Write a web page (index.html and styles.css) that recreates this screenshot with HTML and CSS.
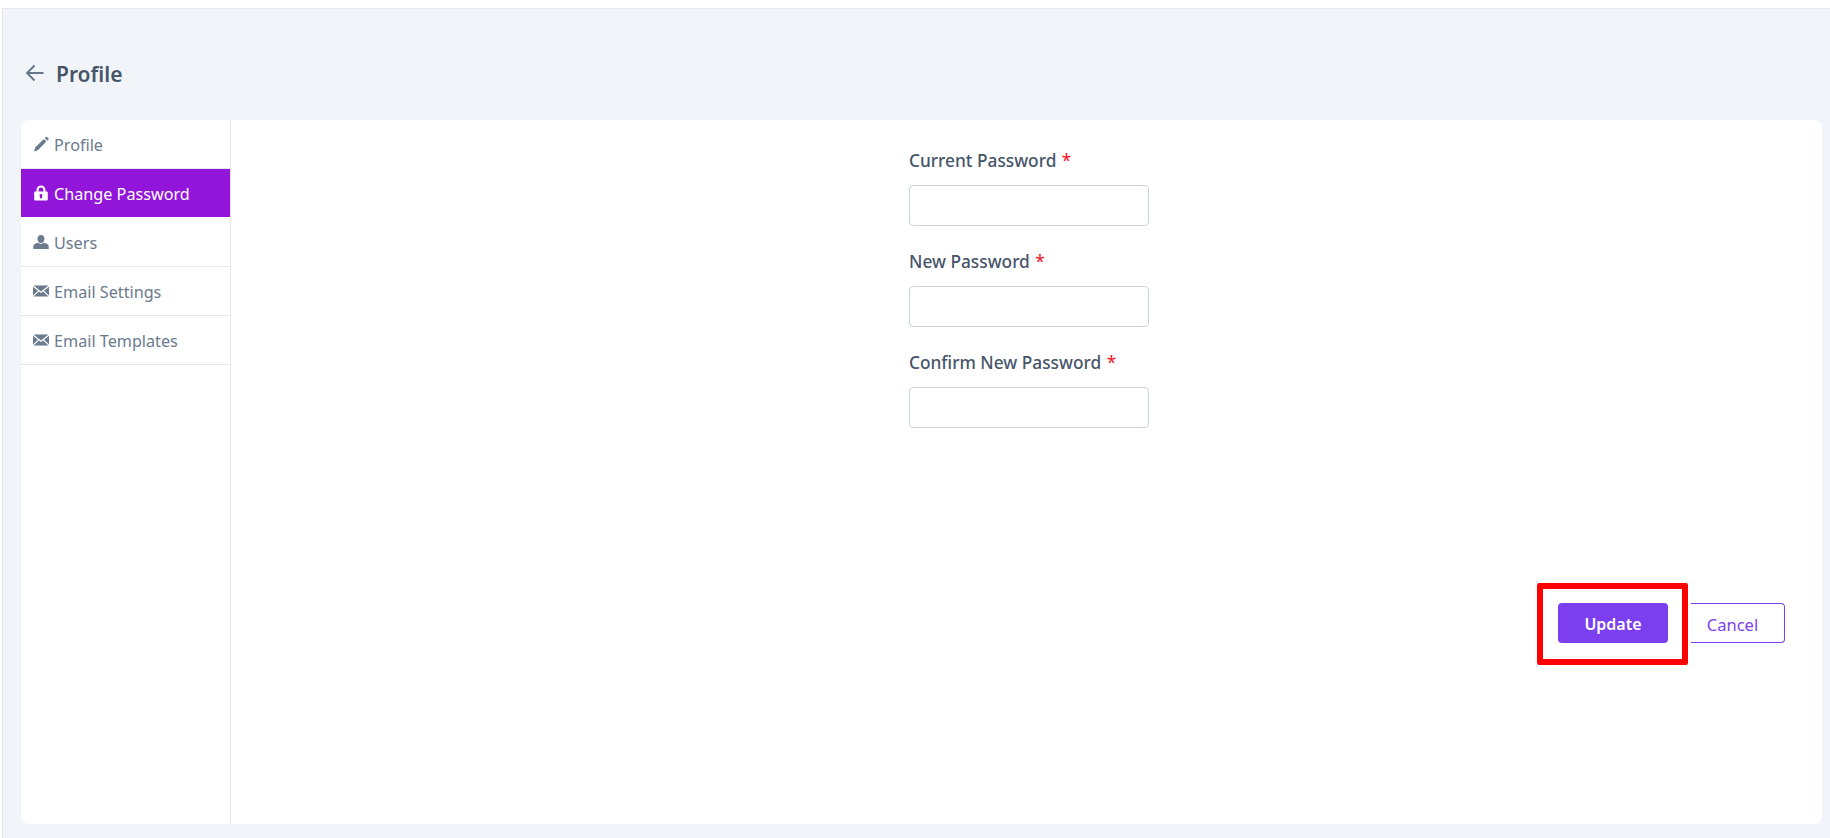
FILE: index.html
```html
<!DOCTYPE html>
<html lang="en">
<head>
<meta charset="utf-8">
<title>Profile</title>
<link rel="stylesheet" href="styles.css">
</head>
<body>
<main class="app">
  <header class="page-head">
    <svg class="back" viewBox="0 0 20 20" width="20" height="20"><path d="M18.500 10H2M9.500 2.500 2 10l7.500 7.500" fill="none" stroke="currentColor" stroke-width="1.8"/></svg>
    <h1>Profile</h1>
  </header>
  <section class="card">
    <nav class="side">
      <a class="item"><svg class="ico" viewBox="0 0 16 16"><path d="M10.800 3 13.400 5.600 4.800 14.200 1 15.500 2.200 11.600ZM11.700 2.100l1.200-1.200a.8.8 0 0 1 1.100 0l1.500 1.500a.8.8 0 0 1 0 1.100l-1.200 1.200Z" fill="currentColor"/></svg><span>Profile</span></a>
      <a class="item active"><svg class="ico" viewBox="0 0 16 16"><path fill-rule="evenodd" d="M3.500 6.500V5a4.500 4.500 0 0 1 9 0v1.500h1c.7 0 1.300.5 1.300 1.200v6.500c0 .7-.6 1.300-1.300 1.300H2.500c-.7 0-1.300-.6-1.300-1.300V7.700c0-.7.600-1.200 1.300-1.200ZM5.600 6.500h4.800V5a2.400 2.400 0 0 0-4.800 0ZM8 9a1.500 1.500 0 0 0-.9 2.700V13.500h1.800v-1.800A1.500 1.500 0 0 0 8 9Z" fill="currentColor"/></svg><span>Change Password</span></a>
      <a class="item"><svg class="ico" viewBox="0 0 16 16"><path d="M8 1c2.200 0 3.500 1.600 3.500 3.700S10.200 9 8 9 4.500 6.800 4.500 4.700 5.800 1 8 1ZM5.300 8.800C6 9.500 7 10 8 10s2-.5 2.700-1.200c2.800.5 5 1.600 5 3.400V15H.3v-2.800c0-1.800 2.200-2.900 5-3.400Z" fill="currentColor"/></svg><span>Users</span></a>
      <a class="item"><svg class="ico" viewBox="0 0 16 16"><path d="M.5 2.500h15L8 8.500ZM0 3.700 5 7.700 0 12.500ZM16 3.700V12.500L11 7.700ZM5.900 8.400 8 10.100l2.100-1.700 5.400 5.100H.5Z" fill="currentColor"/></svg><span>Email Settings</span></a>
      <a class="item"><svg class="ico" viewBox="0 0 16 16"><path d="M.5 2.500h15L8 8.500ZM0 3.700 5 7.700 0 12.500ZM16 3.700V12.500L11 7.700ZM5.900 8.400 8 10.100l2.100-1.700 5.400 5.100H.5Z" fill="currentColor"/></svg><span>Email Templates</span></a>
    </nav>
    <div class="panel">
      <form class="form">
        <div class="field"><label class="label" for="cur">Current Password <span class="req">*</span></label><input class="input" id="cur" type="password"></div>
        <div class="field"><label class="label" for="new">New Password <span class="req">*</span></label><input class="input" id="new" type="password"></div>
        <div class="field"><label class="label" for="conf">Confirm New Password <span class="req">*</span></label><input class="input" id="conf" type="password"></div>
      </form>
      <div class="actions">
        <div class="update-wrap">
          <button class="btn primary" type="button">Update</button>
          <span class="highlight"></span>
        </div>
        <button class="btn outline" type="button">Cancel</button>
      </div>
    </div>
  </section>
</main>
</body>
</html>
```
FILE: styles.css
```css
* { box-sizing: border-box; }
html, body { margin: 0; height: 100%; background: #fff; }
body {
  padding: 8px 0 0 2px;
  height: 838px;
  overflow: hidden;
  font-family: "Noto Sans", "Open Sans", sans-serif;
}
.app {
  height: 830px;
  background: #f1f5f9;
  border-top: 1px solid #e5e7eb;
  border-left: 1px solid #e5e7eb;
  padding: 0 8px 14px 18px;
  display: flex;
  flex-direction: column;
}
.page-head {
  height: 111px;
  display: flex;
  align-items: center;
  gap: 11px;
  padding: 18px 0 0 4px;
  color: #475569;
}
.back { color: #64748b; flex: none; position: relative; top: -1px; }
h1 { margin: 0; font-size: 21px; font-weight: 600; color: #475569; line-height: 28px; }
.card {
  flex: 1;
  background: #fff;
  border-radius: 8px;
  display: flex;
  overflow: hidden;
}
.side {
  width: 210px;
  flex: none;
  border-right: 1px solid #e5e7eb;
}
.item {
  height: 49px;
  display: flex;
  align-items: center;
  gap: 5px;
  padding: 0 12px;
  font-size: 16.200px;
  color: #6b7a8d;
  border-bottom: 1px solid #e5e7eb;
}
.item span { padding-top: 2px; }
.item.active {
  height: 48px;
  margin-bottom: 1px;
  background: #9216d9;
  color: #fff;
  border-bottom: 0;
}
.ico { width: 16px; height: 16px; flex: none; }
.panel { flex: 1; position: relative; display: flex; flex-direction: column; }
.form {
  width: 240px;
  margin-left: 678px;
  padding-top: 28px;
  display: flex;
  flex-direction: column;
  gap: 23px;
}
.field { display: flex; flex-direction: column; gap: 12px; }
.label { font-size: 17.300px; font-weight: 500; line-height: 24px; padding-top: 1px; color: #475569; white-space: nowrap; }
.req { color: #f5101f; font-weight: 400; margin-left: 1px; }
.input {
  height: 41px;
  width: 240px;
  border: 1px solid #cbd5e1;
  border-radius: 4px;
  background: #fff;
}
.actions {
  display: flex;
  justify-content: flex-end;
  margin-top: 175px;
  padding-right: 37px;
}
.update-wrap { position: relative; margin-right: 23px; }
.btn {
  height: 40px;
  border-radius: 4px;
  font-family: inherit;
  font-size: 16px;
  cursor: pointer;
}
.primary {
  width: 110px;
  display: block;
  padding: 2px 0 0;
  background: #7c3fef;
  border: 0;
  color: #fff;
  font-weight: 600;
}
.outline {
  width: 94px;
  padding: 2px 10px 0 0;
  background: #fff;
  border: 1px solid #7c3fef;
  border-left: 0;
  border-radius: 0 4px 4px 0;
  color: #7c3fef;
  font-weight: 400;
  font-size: 16.500px;
}
.highlight {
  position: absolute;
  left: -21px;
  top: -20px;
  width: 151px;
  height: 82px;
  border: 6px solid #ff0000;
  border-radius: 2px;
}
```
